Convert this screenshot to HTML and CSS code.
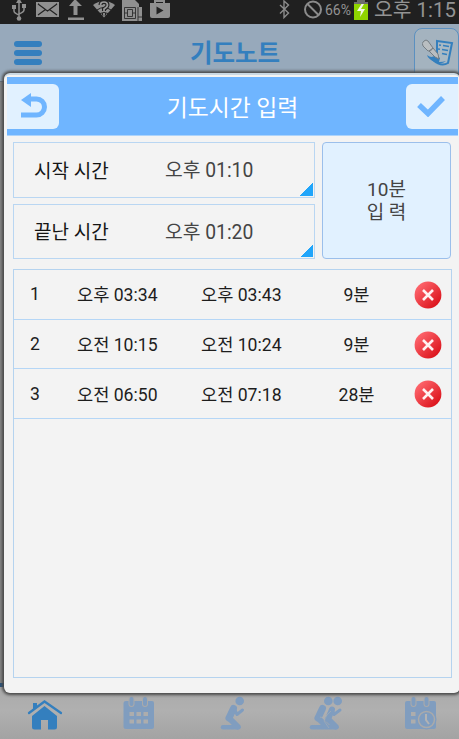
FILE: index.html
```html
<!DOCTYPE html>
<html lang="ko">
<head>
<meta charset="utf-8">
<title>기도노트</title>
<link rel="stylesheet" href="styles.css">
</head>
<body>
<div class="app">
  <div class="status">
    <svg class="status-icons" width="175" height="24" viewBox="0 0 175 24" fill="#909090">
      <g fill="none" stroke="#909090" stroke-width="1.5"><path d="M19 2V19M14 7v4q0 2 5 4M24 6v4q0 2-5 4"/></g>
      <path d="M16 3l3-5 3 5zM12 5h4v4h-4zM22 4h4v4h-4z"/><circle cx="19" cy="18.500" r="2.300"/>
      <path d="M36 2h23v15H36z"/><path d="M38 4l7.500 5.500L38 15M57 4l-7.500 5.500L57 15M38 4l9.500 7L57 4" fill="none" stroke="#222" stroke-width="1.200"/>
      <path d="M75-1l7 7h-4.500v9h-4V6H69zM68 17.500h16v2.500H68z"/>
      <path d="M93 5q11-8 22 0l-11 12.500z"/><path d="M97 10q7-5 14 0M100 13.500q4-2 8 0" fill="none" stroke="#222" stroke-width="1"/>
      <path d="M100.500 5q0-3 3.500-3t3.500 3q0 2-3.500 4v2m0 2v2.500" fill="none" stroke="#222" stroke-width="4"/><path d="M100.500 5q0-3 3.500-3t3.500 3q0 2-3.500 4v2m0 2v2.500" fill="none" stroke="#999" stroke-width="1.700"/>
      <path d="M122 0h13l4 4v3h3v14h-20z"/><path d="M124.500 7.500h11v11h-11zM127.500 9.500h5v7h-5zM124.500 13h3M132.500 13h3M138 7v14M138 17h4" fill="none" stroke="#2c2c2c" stroke-width=".9"/>
      <path d="M150 3h20v13q0 2-2 2h-16q-2 0-2-2z"/><path d="M155 3V1h9v2" fill="none" stroke="#909090" stroke-width="2"/><path d="M156.500 6.500l7 4-7 4z" fill="#222"/>
    </svg>
    <div class="status-right">
      <svg width="47" height="24" viewBox="0 0 47 24" fill="none" stroke="#8c8c8c"><path d="M1 5l8.500 8-4.500 4.500V1l4.500 4L1 13.500" stroke-width="1.400"/><circle cx="34" cy="9.500" r="8" stroke-width="2"/><path d="M28.500 4l11 11" stroke-width="2"/></svg>
      <span class="percent">66%</span>
      <svg class="battery" width="14" height="24" viewBox="0 0 14 24"><path fill="#6c6c6c" d="M3 0h8v2h3v4H0V2h3z"/><path fill="#90d500" d="M0 4h14v16H0z"/><path fill="#f2f8e5" d="M7.500 4L3 11h4l-1 6 5-8H7l3-5z"/></svg>
      <span class="clock">오후 1:15</span>
    </div>
  </div>
  <div class="topbar">
    <div class="menu"><i></i><i></i><i></i></div>
    <h1>기도노트</h1>
    <div class="note">
      <svg width="34" height="30" viewBox="0 0 34 30"><path d="M15 3l15 2-4 20q-7 4-15-3 4 0 4-5z" fill="#a9b9c4" stroke="#347fbd" stroke-width="2"/><path d="M17 7l2 .3M21 7.500l6 1M16 11l2 .3M20 11.500l6 1M20 15.500l5 1" stroke="#347fbd" stroke-width="1.500"/><path d="M5 17q5 4 8 0l5 3-1 4q4 0 7-1-5 4-11 1-7-3-8-7z" fill="#347fbd"/><path d="M2 3q-3 2-1 5l5 5q3 1 5-3L6 3Q4 1 2 3zM7 13l6 6 4 2-1-5-5-6z" fill="#b9bec1" stroke="#747d83"/></svg>
    </div>
  </div>
  <div class="page"></div>
  <div class="nav">
    <svg width="459" height="55" viewBox="0 684 459 55" fill="#809dbf">
      <g fill="#347fbe"><path d="M33 703h4v3l-4 4zM32 716l12.500-10L57 716v11q0 2.500-2.500 2.500H48V720h-7v9.500h-6.500Q32 729.500 32 727z"/><path d="M29 713l15.500-11.500L61 713" fill="none" stroke="#347fbe" stroke-width="2.300" stroke-linecap="round"/></g>
      <path d="M126 701h26q2 0 2 2v24q0 2-2 2h-26q-2.500 0-2.500-2v-24q0-2 2.500-2z"/>
      <g stroke-linecap="round"><path d="M131.500 699v5M145 699v5" stroke="#aaa" stroke-width="6"/><path d="M131.500 699v5M145 699v5" stroke="#809dbf" stroke-width="4"/></g>
      <path fill="#adadad" d="M129.500 712h4.500v4h-4.500zM136.500 712h4.500v4h-4.500zM143.500 712h4.500v4h-4.500zM129.500 719.500h4.500v4h-4.500zM136.500 719.500h4.500v4h-4.500zM143.500 719.500h4.500v4h-4.500z"/>
      <g fill="none" stroke="#809dbf" stroke-linecap="round" stroke-linejoin="round">
        <path d="M233.500 708.500L229 718" stroke-width="7"/><path d="M229 718l8.500 8.500" stroke-width="6"/><path d="M223 727.300h15.500" stroke-width="4.500"/><path d="M234 708l3 6.500 5.500-4.500" stroke-width="3"/>
        <path d="M322.500 708.500L318 718" stroke-width="7"/><path d="M318 718l8 8M328 719l7.500 7.500" stroke-width="6"/><path d="M312 727.300h24.500" stroke-width="4.500"/><path d="M332 709.500L328 719" stroke-width="6"/><path d="M332 709l2 5.500 6-4.500" stroke-width="3"/>
      </g>
      <circle cx="239.700" cy="701" r="4.300"/><circle cx="328.300" cy="701" r="4.300"/><circle cx="337.700" cy="701" r="4.300"/>
      <path d="M320 717l4 1 7-7M327 715l-3 6 5 7" fill="none" stroke="#a9aeb4" stroke-width=".6"/>
      <path d="M407 701h27q2 0 2 2v24q0 2-2 2h-27q-2 0-2-2v-24q0-2 2-2z"/>
      <g stroke-linecap="round"><path d="M413.500 699v5M426.500 699v5" stroke="#aaa" stroke-width="6"/><path d="M413.500 699v5M426.500 699v5" stroke="#809dbf" stroke-width="4"/></g>
      <path fill="#adadad" d="M411 712h4.500v4H411zM411 719.500h4.500v4H411z"/><circle cx="426.500" cy="719.500" r="10"/><circle cx="426.500" cy="719.500" r="8" fill="none" stroke="#aaa" stroke-width="1.500"/><path d="M426 714v6l3 4" fill="none" stroke="#b3b3b3" stroke-width="2"/>
    </svg>
  </div>
</div>

<div class="dialog">
  <div class="dialog-head">
    <div class="btn back"><svg width="28" height="28" viewBox="0 0 28 28"><path d="M1 23h15.500a8 8 0 0 0 0-16H10" fill="none" stroke="#6fb5ff" stroke-width="5"/><path d="M1 8l10-7v14z" fill="#6fb5ff"/></svg></div>
    <h2>기도시간 입력</h2>
    <div class="btn ok"><svg width="28" height="22" viewBox="0 0 28 22"><path d="M2 10l9 8.500L26 3" fill="none" stroke="#6fb5ff" stroke-width="5.500"/></svg></div>
  </div>
  <div class="dialog-body">
    <div class="inputs">
      <div class="fields">
        <div class="field"><span class="label">시작 시간</span><span class="value">오후 01:10</span></div>
        <div class="field"><span class="label">끝난 시간</span><span class="value">오후 01:20</span></div>
      </div>
      <div class="submit"><span>10분</span><span>입 력</span></div>
    </div>
    <div class="list">
      <div class="row"><span class="num">1</span><span>오후 03:34</span><span>오후 03:43</span><span class="mins">9분</span><svg class="del" width="28" height="28" viewBox="0 0 28 28"><defs><linearGradient id="red" x1="0" y1="0" x2="1" y2="1"><stop offset=".1" stop-color="#ff6970"/><stop offset=".9" stop-color="#da1018"/></linearGradient></defs><circle cx="14" cy="14" r="13.400" fill="url(#red)"/><path d="M9 9l10 10M19 9L9 19" stroke="#fff1f1" stroke-width="2.600"/></svg></div>
      <div class="row"><span class="num">2</span><span>오전 10:15</span><span>오전 10:24</span><span class="mins">9분</span><svg class="del" width="28" height="28" viewBox="0 0 28 28"><circle cx="14" cy="14" r="13.400" fill="url(#red)"/><path d="M9 9l10 10M19 9L9 19" stroke="#fff1f1" stroke-width="2.600"/></svg></div>
      <div class="row"><span class="num">3</span><span>오전 06:50</span><span>오전 07:18</span><span class="mins">28분</span><svg class="del" width="28" height="28" viewBox="0 0 28 28"><circle cx="14" cy="14" r="13.400" fill="url(#red)"/><path d="M9 9l10 10M19 9L9 19" stroke="#fff1f1" stroke-width="2.600"/></svg></div>
    </div>
  </div>
</div>
</body>
</html>
```
FILE: styles.css
```css
* { box-sizing: border-box; }
body { margin: 0; width: 459px; height: 739px; overflow: hidden; position: relative; font-family: Roboto, "Noto Sans CJK KR", sans-serif; }
h1, h2 { margin: 0; }
svg { display: block; flex: none; }
.app { height: 739px; display: flex; flex-direction: column; background: #878787; }
.status { height: 24px; background: #202020; display: flex; justify-content: space-between; }
.status-right { display: flex; width: 180px; color: #939393; white-space: nowrap; }
.percent { margin-left: -1px; width: 28px; font-size: 14px; line-height: 20px; }
.battery { margin: 0 6px 0 1px; }
.clock { font-size: 20.4px; line-height: 20px; }
.topbar { height: 58px; background: #97a9bb; display: grid; grid-template-columns: 180px 1fr 45px; border-bottom: 1px solid #65737f; }
.menu { padding: 17px 0 0 14px; display: flex; flex-direction: column; gap: 3.3px; }
.menu i { display: block; width: 28px; height: 5.7px; border-radius: 3px; background: #347fbe; }
h1 { padding-left: 10px; font-size: 24.5px; line-height: 60px; font-weight: 700; color: #347fbe; }
.note { margin-top: 4px; border: 1px solid #5b90c0; border-radius: 8px 8px 0 0; background: #a4b3bf; padding: 9px 0 0 7px; }
.page { flex: 1; }
.nav { height: 56px; border-top: 4px solid #28527c; background: linear-gradient(#aaa, #b0b0b0 45%, #a3a3a3); overflow: hidden; }
.nav svg { margin-top: -3px; }
.dialog { position: absolute; left: 4px; top: 73px; width: 456px; height: 620px; padding: 3px 2px 0 3px; border-radius: 6px; background: #f3f3f3; border-top: 2px solid #cbd9e3; box-shadow: 0 0 3px 2px #4a4a4a; display: flex; flex-direction: column; }
.dialog-head { height: 59px; margin-top: -1px; background: #6fb5ff; border-bottom: 1px solid #acd3fb; display: grid; grid-template-columns: 52px 1fr 52px; align-items: center; flex: none; }
h2 { text-align: center; font-size: 22.8px; line-height: 53px; padding-top: 5px; font-weight: 400; color: #fff; }
.btn { height: 45px; background: #e1f1ff; display: flex; align-items: center; }
.back { padding-left: 13px; border-radius: 0 6px 6px 0; }
.ok { padding-left: 11px; border-radius: 6px 0 0 6px; }
.dialog-body { flex: 1; display: flex; flex-direction: column; padding: 6px 6px 15px; }
.inputs { display: flex; gap: 7px; height: 117px; flex: none; }
.fields { width: 302px; display: flex; flex-direction: column; gap: 6px; }
.field { flex: 1; border: 1px solid #b9d6f2; display: flex; align-items: center; padding: 0 0 1px 20px; font-size: 19px; color: #151515; background: linear-gradient(135deg, transparent 50%, #20a5fa 50%) right 1px bottom 1px / 13px 13px no-repeat; }
.label { width: 131px; }
.value { color: #444; font-size: 19.3px; }
.submit { width: 129px; border: 1px solid #9bbfeb; border-radius: 4px; background: #e1f1ff; display: flex; flex-direction: column; justify-content: center; align-items: center; font-size: 19px; line-height: 23.5px; color: #444; padding-top: 1px; }
.list { margin-top: 10px; flex: 1; border: 1px solid #b5d3ef; }
.row { height: 49.7px; border-bottom: 1px solid #b5d6f6; display: grid; grid-template-columns: 47px 124px 124px 93px 1fr; align-items: center; padding-left: 16px; font-size: 17.6px; color: #1d1d1d; white-space: nowrap; }
.row span { padding-bottom: 1px; }
.row .num { padding-bottom: 0; }
.mins { text-align: center; width: 63px; }
.del { margin: 1px 0 0 -4px; }
```
